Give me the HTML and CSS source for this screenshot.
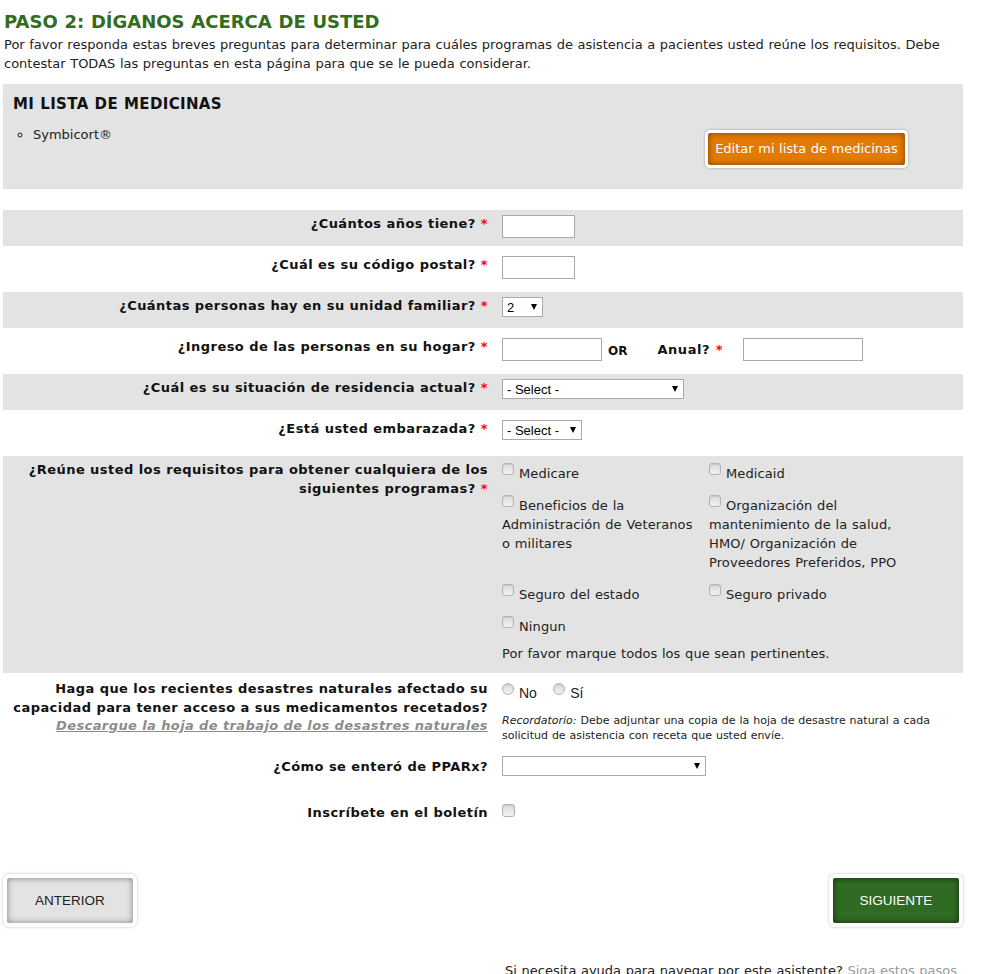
FILE: index.html
```html
<!DOCTYPE html>
<html lang="es">
<head>
  <meta charset="UTF-8">
  <meta name="viewport" content="width=device-width, initial-scale=1">
  <title>Paso 2 - Díganos acerca de usted</title>
  <link rel="stylesheet" href="styles.css">
</head>
<body>
  <div class="page">
    <h1 class="step-title">PASO 2: DÍGANOS ACERCA DE USTED</h1>
    <p class="intro">Por favor responda estas breves preguntas para determinar para cuáles programas de asistencia a pacientes usted reúne los requisitos. Debe contestar TODAS las preguntas en esta página para que se le pueda considerar.</p>

    <div class="med-box">
      <h3>MI LISTA DE MEDICINAS</h3>
      <div class="med-body">
        <ul class="med-list">
          <li>Symbicort®</li>
        </ul>
        <div class="med-action">
          <a href="#" class="btn-edit">Editar mi lista de medicinas</a>
        </div>
      </div>
    </div>

    <form class="questions">
      <div class="row shaded">
        <label class="q">¿Cuántos años tiene? <span class="req">*</span></label>
        <div class="ctrl"><input type="text" class="in-age"></div>
      </div>

      <div class="row">
        <label class="q">¿Cuál es su código postal? <span class="req">*</span></label>
        <div class="ctrl"><input type="text" class="in-age"></div>
      </div>

      <div class="row shaded">
        <label class="q">¿Cuántas personas hay en su unidad familiar? <span class="req">*</span></label>
        <div class="ctrl">
          <span class="sel sel-xs"><select><option>2</option></select></span>
        </div>
      </div>

      <div class="row">
        <label class="q">¿Ingreso de las personas en su hogar? <span class="req">*</span></label>
        <div class="ctrl ctrl-income">
          <input type="text" class="in-month">
          <span class="or">OR</span>
          <span class="annual">Anual? <span class="req">*</span></span>
          <input type="text" class="in-year">
        </div>
      </div>

      <div class="row shaded">
        <label class="q">¿Cuál es su situación de residencia actual? <span class="req">*</span></label>
        <div class="ctrl">
          <span class="sel sel-lg"><select><option>- Select -</option></select></span>
        </div>
      </div>

      <div class="row">
        <label class="q">¿Está usted embarazada? <span class="req">*</span></label>
        <div class="ctrl">
          <span class="sel sel-sm"><select><option>- Select -</option></select></span>
        </div>
      </div>

      <div class="row shaded row-programs">
        <label class="q">¿Reúne usted los requisitos para obtener cualquiera de los siguientes programas? <span class="req">*</span></label>
        <div class="ctrl">
          <div class="programs">
            <label class="prog"><input type="checkbox">Medicare</label>
            <label class="prog"><input type="checkbox">Medicaid</label>
            <label class="prog"><input type="checkbox">Beneficios de la Administración de Veteranos o militares</label>
            <label class="prog"><input type="checkbox">Organización del mantenimiento de la salud, HMO/ Organización de Proveedores Preferidos, PPO</label>
            <label class="prog"><input type="checkbox">Seguro del estado</label>
            <label class="prog"><input type="checkbox">Seguro privado</label>
            <label class="prog"><input type="checkbox">Ningun</label>
          </div>
          <p class="note">Por favor marque todos los que sean pertinentes.</p>
        </div>
      </div>

      <div class="row row-disaster">
        <div class="q">
          Haga que los recientes desastres naturales afectado su capacidad para tener acceso a sus medicamentos recetados?<br>
          <a href="#" class="worksheet">Descargue la hoja de trabajo de los desastres naturales</a>
        </div>
        <div class="ctrl">
          <div class="radios">
            <label><input type="radio" name="disaster">No</label>
            <label><input type="radio" name="disaster">Sí</label>
          </div>
          <p class="reminder"><em>Recordatorio:</em> Debe adjuntar una copia de la hoja de desastre natural a cada solicitud de asistencia con receta que usted envíe.</p>
        </div>
      </div>

      <div class="row row-source">
        <label class="q">¿Cómo se enteró de PPARx?</label>
        <div class="ctrl">
          <span class="sel sel-xl"><select><option></option></select></span>
        </div>
      </div>

      <div class="row row-news">
        <label class="q">Inscríbete en el boletín</label>
        <div class="ctrl"><input type="checkbox" class="news-check"></div>
      </div>
    </form>

    <div class="wizard-nav">
      <a href="#" class="btn-nav btn-prev">ANTERIOR</a>
      <a href="#" class="btn-nav btn-next">SIGUIENTE</a>
    </div>

    <p class="help">Si necesita ayuda para navegar por este asistente? <a href="#">Siga estos pasos</a></p>
  </div>
</body>
</html>
```

FILE: styles.css
```css
/* Reset */
* {
  margin: 0;
  padding: 0;
  box-sizing: border-box;
}

body {
  font-family: "DejaVu Sans", Verdana, sans-serif;
  font-size: 13px;
  line-height: 19px;
  word-spacing: 0.45px;
  color: #222;
  background: #fff;
}

.page {
  width: 960px;
  margin-left: 3px;
}

.step-title {
  margin: 11px 0 0 1px;
  font-size: 18px;
  line-height: 22px;
  color: #336b1f;
}

.intro {
  margin: 2px 0 0 1px;
}

/* Medicine list box */
.med-box {
  margin-top: 11px;
  min-height: 105px;
  padding: 10px 10px;
  background: #e3e3e3;
}

.med-box h3 {
  font-size: 15px;
  line-height: 20px;
  letter-spacing: 0.35px;
  color: #111;
}

.med-body {
  display: flex;
  margin-top: 11px;
}

.med-list {
  flex: 1;
  list-style: circle;
  padding-left: 20px;
}

.med-action {
  width: 293px;
  text-align: center;
  padding-top: 5px;
}

.btn-edit {
  display: inline-block;
  padding: 6px 7px 7px;
  border: 3px solid #fff;
  border-radius: 5px;
  background: #e27b04;
  color: #fff;
  text-decoration: none;
  box-shadow: inset 0 0 6px rgba(90, 40, 0, 0.75), 0 0 3px rgba(0, 0, 0, 0.3);
}

/* Question rows */
.questions {
  display: flex;
  flex-direction: column;
  gap: 5px;
  margin-top: 21px;
}

.row {
  display: grid;
  grid-template-columns: 485px 1fr;
  column-gap: 14px;
  min-height: 36px;
}

.row.shaded {
  background: #e3e3e3;
}

.q {
  padding-top: 4px;
  text-align: right;
  font-weight: bold;
  letter-spacing: 0.45px;
  word-spacing: 0;
  color: #111;
}

.req {
  color: #f00;
}

.ctrl {
  padding: 5px 0 8px;
}

input[type="text"] {
  height: 23px;
  border: 1px solid #a9a9a9;
  background: #fff;
  vertical-align: top;
}

.in-age { width: 73px; }
.in-month { width: 100px; }
.in-year { width: 120px; }

.ctrl-income {
  display: flex;
  align-items: flex-start;
}

.or {
  margin: 4px 0 0 6px;
  font-weight: bold;
  font-size: 12px;
  color: #111;
}

.annual {
  margin: 2px 0 0 30px;
  font-weight: bold;
  letter-spacing: 0.55px;
  color: #111;
}

.ctrl-income .in-year {
  margin-left: 20px;
}

/* Fake native selects */
.sel {
  position: relative;
  display: inline-block;
  vertical-align: top;
}

.sel select {
  appearance: none;
  -webkit-appearance: none;
  display: block;
  height: 20px;
  padding: 0 4px;
  border: 1px solid #a9a9a9;
  border-radius: 0;
  background: #fff;
  font-family: "Liberation Sans", Arial, sans-serif;
  font-size: 13px;
  color: #000;
}

.sel::after {
  content: "";
  position: absolute;
  right: 6px;
  top: 7px;
  border-left: 3px solid transparent;
  border-right: 3px solid transparent;
  border-top: 6px solid #000;
  pointer-events: none;
}

.sel-xs select { width: 41px; }
.sel-sm select { width: 80px; }
.sel-lg select { width: 182px; }
.sel-xl select { width: 204px; }

/* Checkboxes and radios */
input[type="checkbox"],
input[type="radio"] {
  appearance: none;
  -webkit-appearance: none;
  width: 12px;
  height: 12px;
  margin: 0 5px 3px 0;
  border: 1px solid #b3b3b3;
  background: linear-gradient(#d9d9d9, #f2f2f2);
  box-shadow: inset 0 1px 1px rgba(0, 0, 0, 0.08);
}

input[type="checkbox"] {
  border-radius: 3px;
}

input[type="radio"] {
  border-radius: 50%;
}

.programs {
  display: grid;
  grid-template-columns: 207px 207px;
  row-gap: 12px;
  margin-top: 2px;
}

.prog {
  max-width: 197px;
  letter-spacing: 0.1px;
}

.note {
  margin-top: 8px;
  letter-spacing: 0.05px;
}

.row-programs .ctrl {
  padding-bottom: 10px;
}

.row-disaster .q {
  padding-top: 2px;
  line-height: 18.5px;
}

.worksheet {
  color: #8c8c8c;
  font-style: italic;
  letter-spacing: 0.4px;
}

.row-disaster .ctrl {
  padding: 5px 0 3px;
}

.radios {
  font-family: "Liberation Sans", Arial, sans-serif;
  font-size: 14px;
  line-height: 19px;
}

.radios label {
  margin-right: 12px;
}

.radios input {
  margin-right: 5px;
}

.reminder {
  margin-top: 10px;
  font-size: 11px;
  line-height: 15px;
  color: #222;
}

.row-source {
  min-height: 43px;
}

.row-source .q {
  padding-top: 6px;
}

.news-check {
  display: block;
  margin-top: 3px;
  width: 13px !important;
  height: 13px !important;
}

/* Wizard navigation */
.wizard-nav {
  display: flex;
  justify-content: space-between;
  margin-top: 39px;
}

.btn-nav {
  display: block;
  width: 134px;
  height: 53px;
  border: 4px solid #fff;
  border-radius: 6px;
  font-family: "Liberation Sans", Arial, sans-serif;
  font-size: 13.5px;
  line-height: 45px;
  word-spacing: 0;
  text-align: center;
  text-decoration: none;
}

.btn-prev {
  background: #e3e3e3;
  color: #222;
  box-shadow: inset 0 0 6px rgba(0, 0, 0, 0.45), 0 0 3px rgba(0, 0, 0, 0.25);
}

.btn-next {
  background: #2f6b22;
  color: #fff;
  box-shadow: inset 0 0 6px rgba(0, 0, 0, 0.6), 0 0 3px rgba(0, 0, 0, 0.25);
}

.help {
  margin-top: 34px;
  padding-right: 6px;
  text-align: right;
  font-size: 13px;
}

.help a {
  color: #999;
  text-decoration: none;
}
```
